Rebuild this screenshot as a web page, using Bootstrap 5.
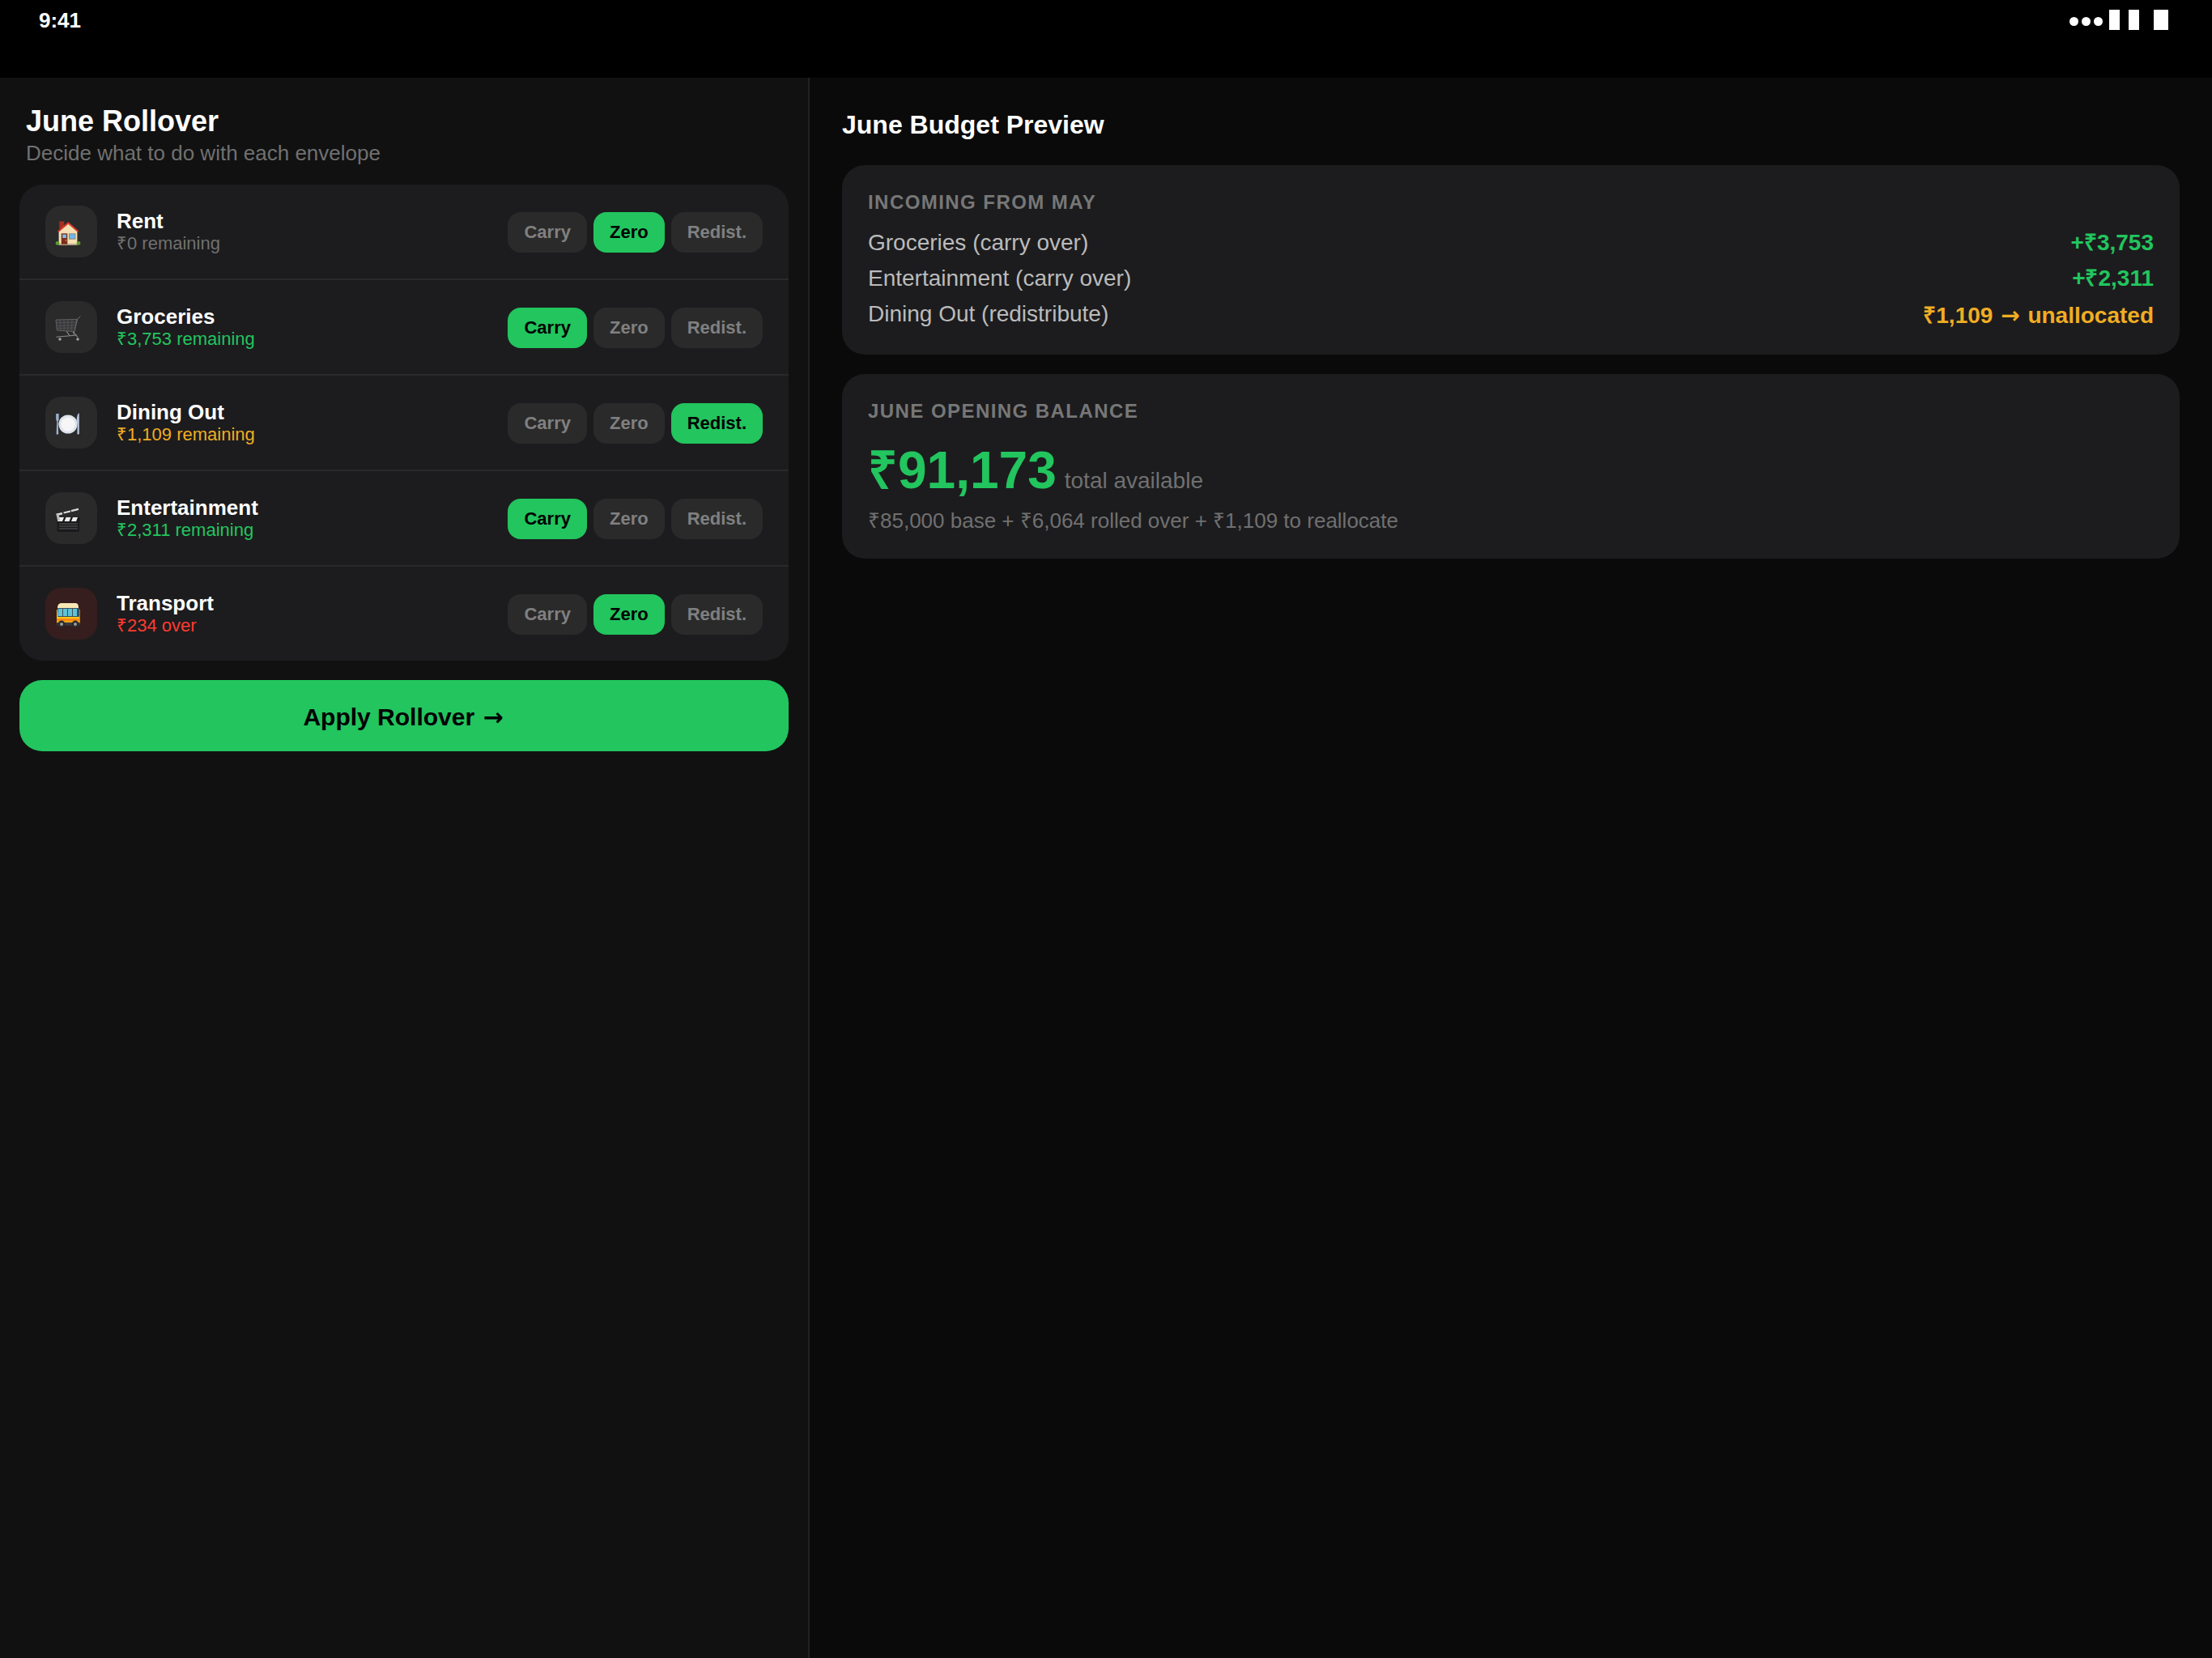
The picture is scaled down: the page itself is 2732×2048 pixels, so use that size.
<!DOCTYPE html>
<html lang="en">

<head>
    <meta charset="UTF-8">
    <meta name="viewport" content="width=device-width, initial-scale=1.0">
    <title>June Rollover</title>

    <link href="https://cdn.jsdelivr.net/npm/bootstrap@5.3.0/dist/css/bootstrap.min.css" rel="stylesheet">

    <style>
        body {
            background-color: #000;
            color: #fff;
            font-family: "Liberation Sans", Arial, sans-serif;
            height: 2048px;
            overflow: hidden;
        }

        .status-bar {
            height: 96px;
            background-color: #000;
            padding: 10px 54px 0 48px;
        }

        .status-time {
            font-size: 26px;
            font-weight: 700;
            line-height: 30px;
        }

        .status-icons { padding-top: 2px; }
        .status-dot { width: 11px; height: 11px; margin: 9px 4px 0 0; background: #fff; border-radius: 50%; }
        .status-signal { width: 13px; height: 25px; margin-left: 4px; margin-right: 7px; background: #fff; }
        .status-signal + .status-signal { margin-left: 4px; margin-right: 0; }
        .status-battery { width: 18px; height: 25px; margin-left: 18px; background: #fff; }

        .left-panel {
            width: 1000px;
            background-color: #111;
            border-right: 2px solid #222;
            padding: 32px 24px 0;
        }

        .right-panel {
            background-color: #0a0a0a;
            padding: 39px 40px 0;
        }

        .panel-title {
            font-size: 36px;
            font-weight: 700;
            line-height: 44px;
            margin: 0 8px;
        }

        .panel-sub {
            font-size: 26px;
            line-height: 30px;
            color: #707070;
            margin: 2px 8px 24px;
        }

        .envelope-card {
            --bs-list-group-bg: #1c1c1e;
            --bs-list-group-color: #fff;
            --bs-list-group-border-color: #2a2a2a;
            --bs-list-group-border-width: 2px;
            --bs-list-group-border-radius: 28px;
            --bs-list-group-item-padding-x: 32px;
            --bs-list-group-item-padding-y: 26px;
            border: 0;
        }

        .envelope-card .list-group-item {
            border-left: 0;
            border-right: 0;
            border-top: 0;
        }

        .envelope-card .list-group-item:last-child { border-bottom: 0; }

        .env-icon {
            width: 64px;
            height: 64px;
            border-radius: 20px;
            background-color: #2a2a2a;
            padding: 18px 0 0 12px;
        }

        .env-icon.over { background-color: #361e1e; }
        .env-icon svg { width: 32px; height: 32px; display: block; }

        .env-name {
            font-size: 26px;
            font-weight: 700;
            line-height: 30px;
        }

        .env-note {
            font-size: 22px;
            line-height: 26px;
        }

        .note-muted { color: #707070; }
        .note-green { color: #22c55e; }
        .note-amber { color: #f0ad23; }
        .note-red { color: #ff3b30; }

        .arrow {
            font-family: "DejaVu Sans", sans-serif;
            margin: 0 2px;
        }

        .choices { margin-top: 2px; }

        .choice {
            --bs-btn-padding-x: 20px;
            --bs-btn-padding-y: 12px;
            --bs-btn-font-size: 22px;
            --bs-btn-font-weight: 700;
            --bs-btn-line-height: 26px;
            --bs-btn-border-radius: 16px;
            --bs-btn-border-width: 0;
            --bs-btn-bg: #2a2a2a;
            --bs-btn-color: #808080;
            --bs-btn-hover-bg: #2a2a2a;
            --bs-btn-hover-color: #808080;
        }

        .choice.picked {
            --bs-btn-bg: #22c55e;
            --bs-btn-color: #000;
            --bs-btn-hover-bg: #22c55e;
            --bs-btn-hover-color: #000;
        }

        .apply-btn {
            --bs-btn-bg: #22c55e;
            --bs-btn-color: #000;
            --bs-btn-hover-bg: #22c55e;
            --bs-btn-hover-color: #000;
            --bs-btn-border-width: 0;
            --bs-btn-border-radius: 28px;
            --bs-btn-font-size: 30px;
            --bs-btn-font-weight: 700;
            --bs-btn-line-height: 36px;
            margin-top: 24px;
            height: 88px;
            padding-top: 28px;
            padding-bottom: 24px;
        }

        .preview-title {
            font-size: 32px;
            font-weight: 700;
            line-height: 38px;
            margin-bottom: 31px;
        }

        .preview-card {
            --bs-card-bg: #1c1c1e;
            --bs-card-border-width: 0;
            --bs-card-border-radius: 28px;
            --bs-card-color: #fff;
            margin-bottom: 24px;
        }

        .preview-label {
            font-size: 24px;
            font-weight: 700;
            line-height: 28px;
            letter-spacing: 1.44px;
            color: #777;
        }

        .incoming-body { padding: 32px 32px 28px; }
        .incoming-rows { margin-top: 14px; }

        .incoming-row {
            height: 44px;
            font-size: 28px;
            color: #bbb;
        }

        .incoming-row b { font-weight: 700; }
        .incoming-row b.note-amber { margin-top: 4px; }

        .opening-body { padding: 32px; }

        .opening-total {
            margin-top: 22px;
            gap: 10px;
        }

        .opening-amount {
            font-size: 64px;
            font-weight: 700;
            line-height: 74px;
            color: #22c55e;
        }

        .opening-caption {
            font-size: 28px;
            color: #707070;
        }

        .opening-note {
            font-size: 26px;
            line-height: 30px;
            color: #707070;
            margin-top: 10px;
        }
    </style>
</head>

<body>

    <div class="status-bar d-flex justify-content-between align-items-start">
        <div class="status-time">9:41</div>
        <div class="status-icons d-flex align-items-start">
            <span class="status-dot"></span>
            <span class="status-dot"></span>
            <span class="status-dot"></span>
            <span class="status-signal"></span>
            <span class="status-signal"></span>
            <span class="status-battery"></span>
        </div>
    </div>

    <div class="d-flex main-area">

        <!-- Left: envelopes -->
        <div class="left-panel vh-100">
            <h1 class="panel-title">June Rollover</h1>
            <p class="panel-sub">Decide what to do with each envelope</p>

            <ul class="list-group envelope-card">
                <li class="list-group-item d-flex align-items-center">
                    <div class="env-icon flex-shrink-0 me-4">
                        <svg viewBox="0 0 32 32">
                            <rect x="5.3" y="1.3" width="6" height="9" fill="#a5301f"/>
                            <path d="M4.6 14 16.3 4 27.4 14V30.6H4.6z" fill="#f6dfb2"/>
                            <rect x="4.6" y="29" width="22.8" height="1.8" fill="#b8a98c"/>
                            <path d="M3 13.4 16.3 2l13 11.4-1.4 1.4L16.3 4.8 4.4 14.8z" fill="#d8392b"/>
                            <rect x="7.7" y="16.3" width="7.6" height="13.4" fill="#7c2e1c"/>
                            <rect x="9.2" y="17.6" width="4.6" height="4.4" fill="#7cc0ea"/>
                            <circle cx="13.4" cy="25" r=".8" fill="#e8b33a"/>
                            <rect x="17" y="16.3" width="8.4" height="7.4" fill="#8c8478"/>
                            <rect x="18" y="17.3" width="6.4" height="5.4" fill="#6cb8ec"/>
                            <circle cx="3" cy="28.4" r="2.4" fill="#5c9c2e"/>
                            <circle cx="29" cy="28.4" r="2.4" fill="#5c9c2e"/>
                        </svg>
                    </div>
                    <div class="flex-grow-1">
                        <div class="env-name">Rent</div>
                        <div class="env-note note-muted">₹0 remaining</div>
                    </div>
                    <div class="choices d-flex gap-2">
                        <button class="btn choice">Carry</button>
                        <button class="btn choice picked">Zero</button>
                        <button class="btn choice">Redist.</button>
                    </div>
                </li>
                <li class="list-group-item d-flex align-items-center">
                    <div class="env-icon flex-shrink-0 me-4">
                        <svg viewBox="0 0 32 32" fill="none" stroke="#767676">
                            <path d="M31.3.7 27.6 4.4 22.6 23.4" stroke-width="1"/>
                            <path d="M1 5 27 4.4 24 19.6 2.4 18z" fill="#38383a" stroke-width=".7"/>
                            <path d="M1.4 8.8 26 8M1.8 12.4 25.4 11.8M2 15.4 24.6 15M6 5 6.4 18.2M11 4.9 11.2 18.6M16 4.7 16 19M21 4.6 20.4 19.2" stroke="#666668" stroke-width=".5"/>
                            <path d="M1.4 26.2 27 24M14 19 18 24.6M22 19.8 28 26.4" stroke="#8c8c8e" stroke-width="1.1"/>
                            <circle cx="6" cy="29" r="1.8" fill="#a0a0a0" stroke="none"/>
                            <circle cx="28" cy="29" r="1.8" fill="#a0a0a0" stroke="none"/>
                        </svg>
                    </div>
                    <div class="flex-grow-1">
                        <div class="env-name">Groceries</div>
                        <div class="env-note note-green">₹3,753 remaining</div>
                    </div>
                    <div class="choices d-flex gap-2">
                        <button class="btn choice picked">Carry</button>
                        <button class="btn choice">Zero</button>
                        <button class="btn choice">Redist.</button>
                    </div>
                </li>
                <li class="list-group-item d-flex align-items-center">
                    <div class="env-icon flex-shrink-0 me-4">
                        <svg viewBox="0 0 32 32">
                            <circle cx="16" cy="16" r="11.6" fill="#dfe4ec"/>
                            <circle cx="16" cy="16" r="8.6" fill="#f6f6f6"/>
                            <path d="M1.2 3v6.4c0 1.6.8 2.4 1 3l-.6 15c0 1.8 2.6 1.8 2.6 0l-.6-15c.4-.6 1-1.4 1-3V3" fill="#9db2cc"/>
                            <path d="M29 2.6c-1.6 1.6-2.4 6-2.4 10.4 0 1.6.6 2.4 1 2.6l-.2 12c0 1.4 2.4 1.4 2.4 0V2.8z" fill="#b6c6da"/>
                        </svg>
                    </div>
                    <div class="flex-grow-1">
                        <div class="env-name">Dining Out</div>
                        <div class="env-note note-amber">₹1,109 remaining</div>
                    </div>
                    <div class="choices d-flex gap-2">
                        <button class="btn choice">Carry</button>
                        <button class="btn choice">Zero</button>
                        <button class="btn choice picked">Redist.</button>
                    </div>
                </li>
                <li class="list-group-item d-flex align-items-center">
                    <div class="env-icon flex-shrink-0 me-4">
                        <svg viewBox="0 0 32 32">
                            <rect x="2.7" y="17" width="27.3" height="14" rx="1" fill="#1a1a1c"/>
                            <path d="M5 21H28M5 24H28M5 27H28" stroke="#77777a" stroke-width=".7"/>
                            <rect x="2" y="13" width="28.6" height="5" fill="#1a1a1c"/>
                            <path d="M3 18 5 13H11L9 18zM11.5 18 13.5 13H19.5L17.5 18zM20 18 22 13H28L26 18z" fill="#ececec"/>
                            <path d="M1.3 8.6 8.7 7 9.2 9.4 2 11zM10.3 6.4 18.7 4.4 19.2 6.6 10.8 8.6zM19.7 4 28.7 1.8 29.2 4 20.2 6.2z" fill="#dcdcdc"/>
                            <path d="M1.6 9.5 4.6 9 6.2 17H3z" fill="#bdbdbd"/>
                        </svg>
                    </div>
                    <div class="flex-grow-1">
                        <div class="env-name">Entertainment</div>
                        <div class="env-note note-green">₹2,311 remaining</div>
                    </div>
                    <div class="choices d-flex gap-2">
                        <button class="btn choice picked">Carry</button>
                        <button class="btn choice">Zero</button>
                        <button class="btn choice">Redist.</button>
                    </div>
                </li>
                <li class="list-group-item d-flex align-items-center">
                    <div class="env-icon over flex-shrink-0 me-4">
                        <svg viewBox="0 0 32 32">
                            <path d="M3 7c0-4 2-6 5-6h17c3 0 4 2 4 6v13H3z" fill="#f8e7b4"/>
                            <path d="M2 9h28.6v17H2z" fill="#ffc61a"/>
                            <rect x="3" y="7" width="27" height="11" rx="1" fill="#3c4f5c"/>
                            <path d="M4 8h5v9H3.2zM10 8h5v9h-5zM16 8h5v9h-5zM22 8h5v9h-5z" fill="#5fc3d6"/>
                            <rect x="2" y="20" width="28.6" height="3.6" fill="#ff8a12"/>
                            <rect x="2" y="24.8" width="28.6" height="4" rx="1" fill="#3a3a3c"/>
                            <circle cx="8" cy="27" r="4.4" fill="#2a2a2c"/>
                            <circle cx="8" cy="27" r="2" fill="#9a9a9c"/>
                            <circle cx="25" cy="27" r="4.4" fill="#2a2a2c"/>
                            <circle cx="25" cy="27" r="2" fill="#9a9a9c"/>
                        </svg>
                    </div>
                    <div class="flex-grow-1">
                        <div class="env-name">Transport</div>
                        <div class="env-note note-red">₹234 over</div>
                    </div>
                    <div class="choices d-flex gap-2">
                        <button class="btn choice">Carry</button>
                        <button class="btn choice picked">Zero</button>
                        <button class="btn choice">Redist.</button>
                    </div>
                </li>
            </ul>

            <button class="btn apply-btn w-100">Apply Rollover <span class="arrow">→</span></button>
        </div>

        <!-- Right: preview -->
        <div class="right-panel flex-grow-1">
            <h2 class="preview-title">June Budget Preview</h2>

            <div class="card preview-card">
                <div class="incoming-body">
                    <div class="preview-label">INCOMING FROM MAY</div>
                    <div class="incoming-rows">
                        <div class="incoming-row d-flex justify-content-between align-items-center">
                            <span>Groceries (carry over)</span>
                            <b class="note-green">+₹3,753</b>
                        </div>
                        <div class="incoming-row d-flex justify-content-between align-items-center">
                            <span>Entertainment (carry over)</span>
                            <b class="note-green">+₹2,311</b>
                        </div>
                        <div class="incoming-row d-flex justify-content-between align-items-center">
                            <span>Dining Out (redistribute)</span>
                            <b class="note-amber">₹1,109 <span class="arrow">→</span> unallocated</b>
                        </div>
                    </div>
                </div>
            </div>

            <div class="card preview-card">
                <div class="opening-body">
                    <div class="preview-label">JUNE OPENING BALANCE</div>
                    <div class="opening-total d-flex align-items-baseline">
                        <span class="opening-amount">₹91,173</span>
                        <span class="opening-caption">total available</span>
                    </div>
                    <div class="opening-note">₹85,000 base + ₹6,064 rolled over + ₹1,109 to reallocate</div>
                </div>
            </div>
        </div>
    </div>

    <script src="https://cdn.jsdelivr.net/npm/bootstrap@5.3.0/dist/js/bootstrap.bundle.min.js"></script>

</body>

</html>
